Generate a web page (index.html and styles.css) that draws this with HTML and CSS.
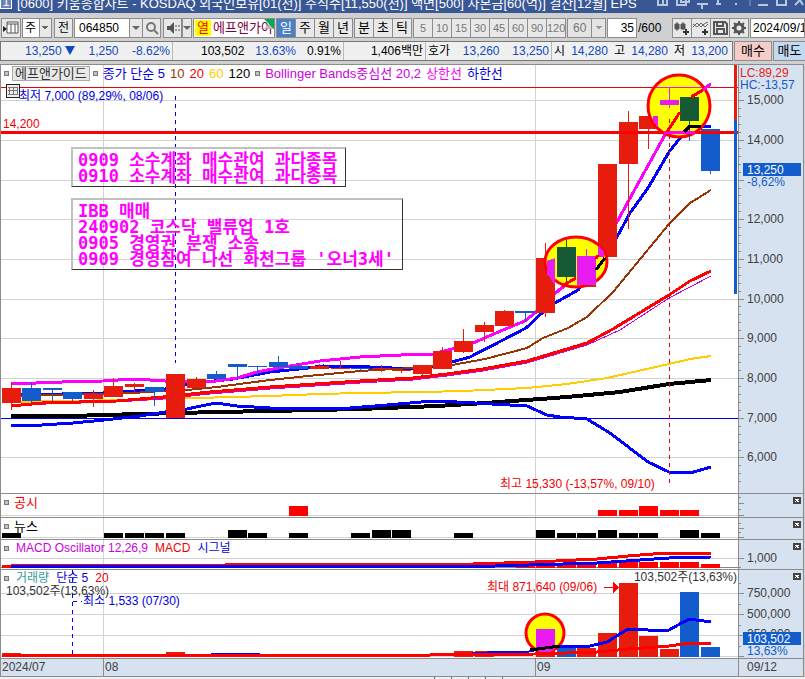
FILE: index.html
```html
<!DOCTYPE html>
<html lang="ko">
<head>
    <meta charset="UTF-8">
    <meta name="viewport" content="width=device-width, initial-scale=1.0">
    <title>키움종합차트</title>
    <link rel="stylesheet" href="styles.css">
</head>
<body>
    <header class="titlebar">
        <span class="title-badge">1</span>
        <span class="title-text">[0600] 키움종합차트 - KOSDAQ 외국인보유[01(천)] 주식수[11,550(천)] 액면[500] 자본금[60(억)] 결산[12월] EPS</span>
        <svg class="title-icons" viewBox="656 0 149 13" fill="none" stroke="#b9c6e0" stroke-width="2">
            <path d="M658 0v5h9v-5M663 0v5M677 0v5h9v-5M681 0v2h8v-2M697 4h11M702 4v5M718 0v4M716 4h5M736 3v2M758 5h10M777 0v5h9v-5M795 5l5-5M803 5l-3-5"/>
            <path d="M750 0v6" stroke="#8799c4" stroke-width="1"/>
        </svg>
    </header>

    <form class="toolbar">
        <button type="button" class="tool icon-tool panel-tool" aria-label="패널">
            <svg viewBox="0 0 16 14"><path d="M4 1h11v11h-11zM4 3h11M8 3v9M12 3v9" fill="#fff" stroke="#555"/><path d="M0 5l4 3-4 3z" fill="#222"/></svg>
        </button>
        <select class="tool pick" aria-label="종목구분"><option>주</option></select>
        <button type="button" class="tool gap">전</button>
        <div class="code-group">
            <input class="tool code" value="064850" aria-label="종목코드">
            <button type="button" class="tool drop" aria-label="종목 목록"></button>
            <button type="button" class="tool icon-tool" aria-label="검색">
                <svg viewBox="0 0 16 14" fill="none" stroke="#777" stroke-width="2"><circle cx="7" cy="6" r="4"/><path d="M10 9l4 4"/></svg>
            </button>
        </div>
        <button type="button" class="tool icon-tool gap" aria-label="소리">
            <svg viewBox="0 0 16 14"><path d="M2 5h3l4-4v12l-4-4h-3z" fill="#555"/><path d="M11 4v6M14 4v6" stroke="#555" stroke-dasharray="2 2"/></svg>
        </button>
        <button type="button" class="tool drop narrow" aria-label="소리 설정"></button>
        <div class="tool stock-name"><b>열</b><span>에프앤가이</span><i></i></div>
        <div class="group periods">
            <button type="button" class="tool on">일</button><button type="button" class="tool">주</button><button type="button" class="tool">월</button><button type="button" class="tool">년</button>
        </div>
        <div class="group periods">
            <button type="button" class="tool">분</button><button type="button" class="tool">초</button><button type="button" class="tool">틱</button>
        </div>
        <div class="group minutes">
            <button type="button" class="tool">5</button><button type="button" class="tool">10</button><button type="button" class="tool">15</button><button type="button" class="tool">30</button><button type="button" class="tool">45</button><button type="button" class="tool">60</button><button type="button" class="tool">90</button><button type="button" class="tool">120</button>
        </div>
        <select class="tool pick minute-pick" aria-label="분 간격" disabled><option>60</option></select>
        <label class="count"><input class="tool" value="35" aria-label="표시 봉수">/600</label>
        <div class="group chart-tools">
            <button type="button" class="tool icon-tool" aria-label="봉 추가"><svg viewBox="0 0 16 14"><path d="M1 3h4v5h-4zM7 3h4v5h-4zM3 1v9M9 1v8" fill="#555" stroke="#555"/><path d="M12 8v6M9 11h6" stroke="#333" stroke-width="2"/></svg></button>
            <button type="button" class="tool icon-tool" aria-label="지표 추가"><svg viewBox="0 0 16 14" fill="none" stroke="#666"><path d="M0 6l4-4 4 4 3-3 4-2M0 3l4 3 4-4 4 4 3-3"/><path d="M12 8v6M9 11h6" stroke="#333" stroke-width="2"/></svg></button>
            <button type="button" class="tool icon-tool" aria-label="저장"><svg viewBox="0 0 16 14" fill="none" stroke="#555" stroke-width="2"><path d="M2 1h11l2 2v10h-13zM5 1v4h6v-4M5 13v-5h7v5"/></svg></button>
            <button type="button" class="tool icon-tool" aria-label="설정"><svg viewBox="0 0 16 14" fill="none" stroke="#555"><circle cx="8" cy="7" r="4" stroke-width="3"/><path d="M8 0v3M8 11v3M1 7h3M12 7h3M3 2l2 2M11 10l2 2M3 12l2-2M11 4l2-2" stroke-width="2"/></svg></button>
        </div>
        <input class="tool date" value="2024/09/12" aria-label="기준일">
    </form>

    <section class="quote">
        <div class="quote-bar">
            <div class="cell price blue"><span>13,250 <i class="down"></i></span><span>1,250</span><span>-8.62%</span></div>
            <div class="cell volume"><span>103,502</span><span class="blue">13.63%</span><span>0.91%</span></div>
            <div class="cell amount"><span>1,406백만</span></div>
            <div class="cell ask"><span>호가</span><span class="blue">13,260</span><span class="blue">13,250</span></div>
            <div class="cell range"><span>시</span><span class="blue">14,280</span><span>고</span><span class="blue">14,280</span><span>저</span><span class="blue">13,200</span></div>
        </div>
        <button type="button" class="order buy">매수</button>
        <button type="button" class="order sell">매도</button>
    </section>

    <main class="chart">
        <section class="pane price-pane">
            <svg class="plot" viewBox="1 65 737 428" preserveAspectRatio="xMaxYMin meet">
                <path class="grid" d="M-3000 100.5H738M-3000 140.5H738M-3000 180.5H738M-3000 219.5H738M-3000 259.5H738M-3000 299.5H738M-3000 338.5H738M-3000 378.5H738M-3000 457.5H738M103.5 65V493M535.5 65V493"/>
                <path class="thin" stroke="#0000e8" d="M-3000 418.5H738"/>

                <!-- moving averages and bands -->
                <g class="lines">
                    <polyline stroke="#ffcc00" stroke-width="2" points="11,402 62,401 133,400 165,399 196,398 233,397 270,396 320,394 360,393 423,392 463,391 527,388 567,384 607,378 669,364 690,359 711,356"/>
                    <polyline stroke="#000" stroke-width="4" points="11,416 70,416 140,414 217,412 270,411 360,409 437,406 485,403 540,399 567,397 620,392 669,384 711,380"/>
                    <polyline stroke="#0000ff" stroke-width="3" points="11,425 42,425 73,423 104,420 140,416 165,412 187,409 196,407 216,403 237,406 270,408 350,408 387,405 433,401 457,402 527,406 547,415 560,417 587,419 610,433 648,462 669,472 690,473 711,467"/>
                    <polyline stroke="#0000ff" stroke-width="3" points="11,395 62,394 103,393 134,391 165,389 187,384 233,379 270,372 308,368 323,366 370,367 413,369 433,366 452,362 470,357 503,340 526,328 543,312 555,303 578,290 597,268 617,237 630,213 648,188 669,152 680,138 690,126 711,126"/>
                    <polyline stroke="#993300" stroke-width="2" points="11,396 83,394 133,393 163,391 187,390 217,387 270,380 308,376 360,371 393,369 413,368 452,365 485,359 508,353 527,348 543,338 568,328 587,317 613,292 669,224 690,203 711,190"/>
                    <polyline stroke="#cc00e0" stroke-width="1" points="11,405 117,402 163,399 210,394 270,389 360,383 413,380 447,376 483,371 527,363 587,345 620,330 669,298 711,276"/>
                    <polyline stroke="#ff0000" stroke-width="3" points="11,406 42,403 117,401 163,397 210,392 270,387 360,381 413,378 447,374 483,369 527,361 587,343 613,329 669,295 690,281 711,271"/>
                    <polyline stroke="#ff00ff" stroke-width="3" points="11,384 62,382 103,381 134,379 165,381 216,381 237,378 257,372 278,368 320,361 360,357 401,355 433,354 452,349 473,343 503,330 525,321 536,312 559,290 576,278 597,257 617,222 629,200 666,133 680,112 691,97 711,84"/>
                </g>

                <!-- candles -->
                <path class="up" d="M2 388h19v15H2zM84 394h19v5H84zM104 386h19v11h-19zM125 384h19v3h-19zM166 374h19v44h-19zM187 379h19v9h-19zM310 366h19v3h-19zM331 368h19v1h-19zM372 368h19v1h-19zM392 370h19v1h-19zM413 365h19v9h-19zM433 351h19v18h-19zM454 341h19v11h-19zM475 325h19v7h-19zM495 311h19v15h-19zM536 258h19v55h-19zM577 256h19v31h-19zM598 164h19v93h-19zM619 122h19v42h-19zM639 116h19v13h-19z"/>
                <path class="up-wick" d="M11.500 382v28M93.500 390v17M113.500 378v10M134.500 383v10M196.500 377v3M319.500 364v3M340.500 361v7M381.500 365v7M401.500 369v4M422.500 372v3M442.500 347v5M463.500 329v24M484.500 322v20M504.500 310v5M545.500 243v74M628.500 111v118M648.500 129v20"/>
                <path class="down-bar" d="M22 388h19v13H22zM43 388h19v2H43zM63 392h19v7H63zM145 387h19v5h-19zM207 374h19v5h-19zM228 364h19v3h-19zM248 366h19v1h-19zM269 362h19v5h-19zM289 366h19v3h-19zM351 368h19v1h-19zM515 311h20v2h-20zM701 129h19v42h-19z"/>
                <path class="down-wick" d="M31.500 382v21M52.500 390v11M72.500 399v2M154.500 391v15M216.500 371v4M237.500 367v11M257.500 366v9M278.500 356v14M298.500 363v4M360.500 368v3M525.500 312v10M689.500 121v20M710.500 171v3"/>

                <path class="thin" stroke="#f00000" d="M-3000 87.500H738"/>
                <path stroke="#ff0000" stroke-width="3" d="M-3000 132.500H738"/>

                <!-- highlight circles -->
                <g stroke-width="3" stroke="#ff0000" fill="#ffff00">
                    <circle cx="679" cy="106" r="31"/>
                    <ellipse cx="576" cy="262" rx="31" ry="25"/>
                </g>
                <path fill="#e81cf0" d="M660 100h19v5h-19zM577 256h19v29h-19zM547 261l8-3v27l-8-11zM598 246l6 5v6h-6zM653 116h5v12l-5-8zM669 88h1v20h-1zM586 249h1v8h-1z"/>
                <path fill="#155a35" d="M680 97h19v24h-19zM557 247h19v30h-19zM566 240h1v44h-1zM689 121h1v15h-1z"/>
                <path class="thin" stroke="#e81cf0" d="M656 87.500h46"/>
                <path stroke="#ff00ff" stroke-width="3" d="M664 132.500h31"/>
                <g fill="none" stroke-width="3">
                    <path stroke="#ff0000" d="M667 132L680 112M691 97L703 90M562 286L576 278M596 259l2-4"/>
                    <path stroke="#000" d="M596 270L605 258M684 132L690 126H701"/>
                    <path stroke="#ff00ff" d="M703 90L711 84"/>
                </g>

                <path class="dash" stroke="#0000cc" d="M175.500 96V363"/>
                <path class="dash" stroke="#e80000" d="M669.500 119V487"/>
                <path class="up" d="M734 65h3v55h-3z"/>
                <path class="down-bar" d="M734 120h3v174h-3z"/>

                <text class="t-red" x="3" y="128">14,200</text>
                <text class="t-blue" x="19" y="100">최저 7,000 (89,29%, 08/06)</text>
                <text class="t-red" x="500" y="488">최고 15,330 (-13,57%, 09/10)</text>
                <g fill="#eee" stroke="#222"><path d="M6.500 84.500h13v13h-13z"/><path stroke="#777" d="M8 87.500h10M8 90.500h10M8 94.500h10M9.500 87v8M13.500 87v8M17.500 87v8"/></g>
            </svg>
            <div class="legend">
                <i class="mark"></i><button type="button" class="stock-chip">에프앤가이드</button><i class="mark"></i>
                <span class="t-blue">종가 단순 5</span><span class="t-brown">10</span><span class="t-red">20</span><span class="t-yellow">60</span><span>120</span>
                <i class="mark"></i><span class="t-purple">Bollinger Bands중심선 20,2</span><span class="t-pink">상한선</span><span class="t-blue">하한선</span>
            </div>
            <p class="note first">0909 소수계좌 매수관여 과다종목<br>0910 소수계좌 매수관여 과다종목</p>
            <p class="note second">IBB 매매<br>240902 코스닥 밸류업 1호<br>0905 경영권 분쟁 소송<br>0909 경영참여 나선 화천그룹 '오너3세'</p>
            <svg class="axis" viewBox="738 65 65 428">
                <path class="tick" d="M738 100.500h6M738 140.500h6M738 180.500h6M738 219.500h6M738 259.500h6M738 299.500h6M738 338.500h6M738 378.500h6M738 418.500h6M738 457.500h6M738 92.500h3M738 108.500h3M738 116.500h3M738 124.500h3M738 132.500h3M738 148.500h3M738 156.500h3M738 164.500h3M738 172.500h3M738 188.500h3M738 195.500h3M738 203.500h3M738 211.500h3M738 227.500h3M738 235.500h3M738 243.500h3M738 251.500h3M738 267.500h3M738 275.500h3M738 283.500h3M738 291.500h3M738 306.500h3M738 314.500h3M738 322.500h3M738 330.500h3M738 346.500h3M738 354.500h3M738 362.500h3M738 370.500h3M738 386.500h3M738 394.500h3M738 402.500h3M738 410.500h3M738 426.500h3M738 434.500h3M738 442.500h3M738 450.500h3M738 465.500h3M738 473.500h3M738 481.500h3"/>
                <text class="t-lc" x="740" y="77">LC:89,29</text>
                <text class="t-hc" x="740" y="89">HC:-13,57</text>
                <text x="747" y="104">15,000</text>
                <text x="747" y="144">14,000</text>
                <path class="down-bar" d="M743 163h58v13h-58z"/>
                <text class="t-white" x="747" y="174">13,250</text>
                <text class="t-hc" x="747" y="186">-8,62%</text>
                <text x="747" y="223">12,000</text>
                <text x="747" y="263">11,000</text>
                <text x="747" y="303">10,000</text>
                <text x="747" y="342">9,000</text>
                <text x="747" y="382">8,000</text>
                <text x="747" y="422">7,000</text>
                <text x="747" y="461">6,000</text>
            </svg>
        </section>

        <section class="pane notice-pane">
            <svg class="plot" viewBox="1 494 737 23" preserveAspectRatio="xMaxYMin meet">
                <path class="grid" d="M-3000 515.500H738M103.500 494V517M535.500 494V517"/>
                <path fill="#ff0000" d="M289 506h19v10h-19zM598 510h19v6h-19zM619 510h19v6h-19zM639 506h19v10h-19zM660 510h19v6h-19zM680 510h19v6h-19z"/>
            </svg>
            <div class="legend"><i class="mark"></i><span class="t-red">공시</span></div>
            <svg class="axis" viewBox="738 494 65 23">
                <path class="tick" d="M738 497.500h3M738 503.500h6M738 509.500h3M738 515.500h6"/>
                <path fill="#444" d="M793 497h8v7h-8z"/><path stroke="#fff" d="M795 499l4 3M799 499l-4 3"/>
            </svg>
        </section>

        <section class="pane news-pane">
            <svg class="plot" viewBox="1 518 737 21" preserveAspectRatio="xMaxYMin meet">
                <path class="grid" d="M-3000 537.500H738M103.500 518V539M535.500 518V539"/>
                <path d="M2 533h19v5H2zM104 533h19v5h-19zM125 533h19v5h-19zM145 533h19v5h-19zM166 533h19v5h-19zM228 530h19v8h-19zM248 533h19v5h-19zM289 533h19v5h-19zM351 533h19v5h-19zM372 530h19v8h-19zM392 530h19v8h-19zM454 533h19v5h-19zM536 530h19v8h-19zM557 533h19v5h-19zM577 533h19v5h-19zM598 530h19v8h-19zM619 533h19v5h-19zM639 533h19v5h-19zM680 530h19v8h-19zM701 533h19v5h-19z"/>
            </svg>
            <div class="legend"><i class="mark"></i><span>뉴스</span></div>
            <svg class="axis" viewBox="738 518 65 21">
                <path class="tick" d="M738 523.500h3M738 528.500h6M738 532.500h3M738 537.500h6"/>
                <path fill="#444" d="M793 521h8v7h-8z"/><path stroke="#fff" d="M795 523l4 3M799 523l-4 3"/>
            </svg>
        </section>

        <section class="pane macd-pane">
            <svg class="plot" viewBox="1 540 737 29" preserveAspectRatio="xMaxYMin meet">
                <path class="grid" d="M-3000 558.500H738M103.500 540V569M535.500 540V569"/>
                <path class="thin" stroke="#888" d="M-3000 567.500H738"/>
                <path fill="#ff0000" d="M516 566h19v2h-19zM536 565h19v3h-19zM557 565h19v3h-19zM577 564h19v4h-19zM598 563h19v5h-19zM619 562h19v6h-19zM639 562h19v6h-19zM660 562h19v6h-19zM680 562h19v6h-19zM701 564h19v4h-19z"/>
                <g class="lines" stroke-width="3">
                    <polyline stroke="#ff0000" points="2,567 11,566 225,565 473,564 535,562 597,559 628,556 665,553 711,553"/>
                    <polyline stroke="#0000ff" points="11,567 308,566 495,566 597,563 640,560 669,558 711,557"/>
                </g>
            </svg>
            <div class="legend"><i class="mark"></i><span class="t-purple">MACD Oscillator 12,26,9</span><span class="t-red">MACD</span><span class="t-blue">시그널</span></div>
            <svg class="axis" viewBox="738 540 65 29">
                <path class="tick" d="M738 558.500h6M738 567.500h3"/>
                <text x="747" y="562">1,000</text>
                <path fill="#444" d="M793 543h8v7h-8z"/><path stroke="#fff" d="M795 545l4 3M799 545l-4 3"/>
            </svg>
        </section>

        <section class="pane volume-pane">
            <svg class="plot" viewBox="1 570 737 88" preserveAspectRatio="xMaxYMin meet">
                <path class="grid" d="M-3000 593.500H738M-3000 614.500H738M-3000 635.500H738M-3000 656.500H738M103.500 570V658M535.500 570V658"/>
                <path class="up" d="M2 653h19v4H2zM166 652h19v5h-19zM454 651h19v6h-19zM475 651h19v6h-19zM536 629h19v28h-19zM577 648h19v9h-19zM598 633h19v24h-19zM619 583h19v74h-19zM639 636h19v21h-19zM660 649h19v8h-19z"/>
                <path class="down-bar" d="M187 654h19v3h-19zM557 648h19v9h-19zM680 592h19v65h-19zM701 647h19v10h-19z"/>
                <circle cx="545" cy="633" r="19" fill="#ffff00" stroke="#ff0000" stroke-width="3"/>
                <path fill="#e81cf0" d="M536 629h19v20l-6 4h-9l-4-4z"/>
                <g class="lines" stroke-width="3">
                    <polyline stroke="#0000ff" stroke-width="2" points="11,656 165,656 226,654 250,654 290,656 450,655 494,652 527,652 545,648"/>
                    <polyline stroke="#0000ff" points="555,646 590,646 607,642 628,629 648,630 669,630 689,619 711,622"/>
                    <polyline stroke="#000" points="530,650 545,648 560,646"/>
                    <polyline stroke="#ff0000" points="2,655 430,655 535,654 597,652 628,649 669,646 690,643 711,643"/>
                </g>
                <path class="dash" stroke="#0000ff" d="M72.500 570V656M73 601.500h9"/>
                <path class="thin" stroke="#ff0000" d="M604 587.500h10"/><path fill="#ff0000" d="M613 582l6 5-6 6z"/>
                <text class="t-gray" x="6" y="595">103,502주(13,63%)</text>
                <text class="t-blue" x="83" y="605">최소 1,533 (07/30)</text>
                <text class="t-red" x="487" y="591">최대 871,640 (09/06)</text>
                <text class="t-gray" x="737" y="581" text-anchor="end">103,502주(13,63%)</text>
            </svg>
            <div class="legend"><i class="mark"></i><span class="t-teal">거래량</span><span class="t-blue">단순 5</span><span class="t-red">20</span></div>
            <svg class="axis" viewBox="738 570 65 88">
                <path class="tick" d="M738 583.500h3M738 593.500h6M738 604.500h3M738 614.500h6M738 625.500h3M738 635.500h6M738 646.500h3M738 656.500h6"/>
                <text x="747" y="597">750,000</text>
                <text x="747" y="618">500,000</text>
                <text x="747" y="638">250,000</text>
                <path class="down-bar" d="M743 632h58v13h-58z"/>
                <text class="t-white" x="747" y="643">103,502</text>
                <text class="t-hc" x="747" y="655">13,63%</text>
                <path fill="#444" d="M793 573h8v7h-8z"/><path stroke="#fff" d="M795 575l4 3M799 575l-4 3"/>
            </svg>
        </section>

        <section class="pane date-pane">
            <svg class="plot" viewBox="1 659 737 17" preserveAspectRatio="xMaxYMin meet">
                <path class="tick" d="M103.500 659V676M535.500 659V676"/>
                <text x="2" y="671">2024/07</text>
                <text x="105" y="671">08</text>
                <text x="537" y="671">09</text>
            </svg>
            <svg class="axis" viewBox="738 659 65 17"><text x="747" y="671">09/12</text></svg>
        </section>
    </main>
    <footer class="tabs"><i></i><i></i><i></i><i></i><i></i></footer>
</body>
</html>
```

FILE: styles.css
```css
* {
    box-sizing: border-box;
}
body {
    margin: 0;
    background-color: #d0d0d0;
    color: #000;
    font-family: "Liberation Sans", "Noto Sans CJK KR", sans-serif;
    font-size: 12px;
    line-height: 14px;
    overflow: hidden;
}
button, input, select {
    font: inherit;
    color: inherit;
}
i {
    font-style: normal;
}
.blue {
    color: #0f4ac0;
}

/* title bar */
.titlebar {
    display: flex;
    align-items: flex-end;
    height: 13px;
    overflow: hidden;
    background-color: #3a5795;
    color: #fff;
    white-space: nowrap;
}
.title-badge {
    width: 12px;
    height: 18px;
    margin-bottom: 4px;
    border: 1px solid #fff;
    background-color: #6b84b8;
    text-align: center;
    line-height: 20px;
}
.title-text {
    flex: 1;
    padding-left: 5px;
    font-size: 13px;
    line-height: 18px;
    overflow: hidden;
}
.title-icons {
    width: 149px;
    height: 13px;
    flex: none;
}

/* toolbar */
.toolbar {
    display: flex;
    height: 28px;
    padding: 5px 0 3px 1px;
    overflow: hidden;
}
.tool {
    flex: none;
    height: 20px;
    width: 19px;
    margin: 0;
    padding: 0;
    border: 1px solid #8c8c8c;
    border-radius: 0;
    background-color: #e8e8e8;
    text-align: center;
    line-height: 18px;
    white-space: nowrap;
}
.icon-tool {
    display: flex;
    align-items: center;
    justify-content: center;
}
.icon-tool svg {
    flex: none;
    width: 16px;
    height: 14px;
}
.panel-tool {
    width: 20px;
}
.pick {
    appearance: none;
    width: 30px;
    margin-left: 1px;
    padding: 0 0 0 2px;
    text-align: left;
    background-image:
        linear-gradient(-135deg, #666 50%, transparent 50%),
        linear-gradient(135deg, #666 50%, transparent 50%),
        linear-gradient(90deg, #fff 16px, #8c8c8c 16px, #8c8c8c 17px, #e8e8e8 17px);
    background-size: 4px 4px, 4px 4px, 100% 100%;
    background-position: right 6px top 7px, right 2px top 7px, 0 0;
    background-repeat: no-repeat;
}
.drop {
    width: 14px;
}
.narrow {
    width: 10px;
}
.drop::after {
    content: "";
    display: block;
    width: 0;
    margin: 0 auto;
    border: 4px solid transparent;
    border-top-color: #666;
    border-bottom: 0;
}
.gap {
    margin-left: 2px;
}
.code-group {
    display: flex;
    margin-left: 1px;
}
.code {
    width: 55px;
    padding-left: 4px;
    background-color: #fff;
    text-align: left;
    border-right: 0;
}
.drop + .icon-tool {
    margin-left: -1px;
}
.stock-name {
    position: relative;
    display: flex;
    width: 82px;
    margin-left: 1px;
    padding: 1px;
    background-color: #fff;
    color: #800040;
    font-size: 13px;
    overflow: hidden;
}
.stock-name b {
    width: 16px;
    background-color: #ff0;
    color: #f00;
    font-weight: normal;
    line-height: 16px;
}
.stock-name span {
    padding-left: 2px;
    line-height: 16px;
}
.stock-name i {
    position: absolute;
    top: 0;
    right: 0;
    border: 5px solid #0a5;
    border-left-color: transparent;
    border-bottom-color: #b4b4b4;
}
.group {
    display: flex;
    margin-left: 1px;
}
.group .tool {
    width: 20px;
}
.group .tool + .tool {
    margin-left: -1px;
}
.group .on {
    background-color: #4a80c8;
    color: #fff;
}
.periods {
    font-size: 13px;
}
.minutes {
    color: #777;
    font-size: 11px;
}
.minute-pick {
    width: 39px;
    padding-left: 5px;
    color: #777;
    opacity: 1;
    background-image:
        linear-gradient(-135deg, #999 50%, transparent 50%),
        linear-gradient(135deg, #999 50%, transparent 50%),
        linear-gradient(90deg, #e4e4e4 23px, #8c8c8c 23px, #8c8c8c 24px, #e4e4e4 24px);
}
.count {
    display: flex;
    margin-left: 1px;
    width: 64px;
    line-height: 20px;
}
.count .tool {
    width: 30px;
    margin-right: 1px;
    padding-right: 2px;
    background-color: #fff;
    text-align: right;
}
.date {
    flex: 1 0 55px;
    margin-left: 1px;
    padding-left: 2px;
    background-color: #fff;
    text-align: left;
}

/* quote strip */
.quote {
    display: flex;
    height: 22px;
    line-height: 18px;
}
.quote-bar {
    display: flex;
    flex: 1;
    height: 20px;
    border: 1px solid #777;
    background-color: #f0f0f0;
    white-space: nowrap;
}
.cell {
    display: flex;
    justify-content: space-between;
    padding: 0 2px;
    border-right: 1px solid #b8b8b8;
}
.cell:last-child {
    border-right: 0;
}
.price {
    width: 172px;
    padding-left: 24px;
}
.volume {
    width: 171px;
    padding-left: 28px;
}
.amount {
    width: 82px;
    justify-content: flex-end;
}
.ask {
    width: 126px;
}
.range {
    flex: 1;
    padding-right: 4px;
}
.down {
    display: inline-block;
    border: 5px solid transparent;
    border-top: 9px solid #0f4ac0;
    border-bottom: 0;
}
.order {
    flex: none;
    width: 38px;
    height: 20px;
    margin-left: 1px;
    padding: 0;
    border: 1px solid #8c8c8c;
    white-space: nowrap;
    font-size: 13px;
    line-height: 16px;
}
.buy {
    background-color: #f4ccc8;
}
.sell {
    width: 32px;
    overflow: hidden;
    border-right: 0;
    background-color: #c4daf2;
}

/* chart */
.chart {
    margin: 1px 1px 0 0;
    border: 1px solid #8c8c8c;
    border-bottom: 0;
}
.pane {
    position: relative;
    display: flex;
    border-bottom: 1px solid #8c8c8c;
    background-color: #fff;
}
.plot {
    flex: 1;
    min-width: 0;
    height: 100%;
}
.axis {
    flex: none;
    width: 65px;
    height: 100%;
    background-color: #d7e2f0;
    box-shadow: inset 1px 0 #8c8c8c;
    fill: #404040;
}
.price-pane {
    height: 429px;
}
.notice-pane {
    height: 24px;
}
.news-pane {
    height: 22px;
}
.macd-pane {
    height: 30px;
}
.volume-pane {
    height: 89px;
}
.date-pane {
    height: 18px;
    background-color: #d7e2f0;
    fill: #404040;
}
.plot path, .axis path {
    shape-rendering: crispEdges;
}
.grid, .tick, .thin, .dash, .up-wick, .down-wick {
    fill: none;
}
.grid {
    stroke: #d3d3d3;
}
.tick {
    stroke: #8c8c8c;
}
.lines {
    fill: none;
    shape-rendering: crispEdges;
}
.dash {
    stroke-dasharray: 4 4;
}
.up {
    fill: #e81c0c;
}
.up-wick {
    stroke: #e81c0c;
}
.down-bar {
    fill: #125ccc;
}
.down-wick {
    stroke: #125ccc;
}
.legend {
    position: absolute;
    top: 1px;
    left: 3px;
    display: flex;
    align-items: center;
    gap: 5px;
    white-space: nowrap;
    font-size: 13px;
    line-height: 15px;
}
.macd-pane .legend, .volume-pane .legend {
    gap: 7px;
    font-size: 12px;
}
.mark {
    width: 5px;
    height: 5px;
    border: 1px solid #777;
    background-color: #c0c0c0;
}
.stock-chip {
    height: 15px;
    margin: 0 -2px;
    padding: 0 2px;
    border: 1px solid #aaa;
    background-color: #e8e8e8;
    color: #333;
    line-height: 12px;
}
.note {
    position: absolute;
    left: 70px;
    margin: 0;
    padding: 3px 8px 2px 5px;
    border: 1px solid #333;
    border-top: 2px solid #c0c0c0;
    border-left: 2px solid #c0c0c0;
    color: #f0f;
    font-family: "DejaVu Sans Mono", "Noto Sans CJK KR", monospace;
    font-size: 17px;
    font-weight: bold;
    line-height: 16px;
    white-space: nowrap;
}
.first {
    top: 82px;
}
.second {
    top: 133px;
}
.t-red {
    color: #f00000;
    fill: #f00000;
}
.t-blue {
    color: #0000e0;
    fill: #0000e0;
}
.t-gray {
    fill: #333;
}
.t-brown {
    color: #993300;
}
.t-yellow {
    color: #ffcc00;
}
.t-purple {
    color: #cc00e0;
}
.t-pink {
    color: #f0f;
}
.t-teal {
    color: #339999;
}
.t-lc {
    fill: #e81c0c;
}
.t-hc {
    fill: #125ccc;
}
.t-white {
    fill: #fff;
}

/* bottom tabs */
.tabs {
    display: flex;
    justify-content: flex-end;
    height: 2px;
    padding-right: 302px;
    background-color: #f0f0f0;
}
.tabs i {
    width: 17px;
    border-right: 1px solid #666;
}
```
